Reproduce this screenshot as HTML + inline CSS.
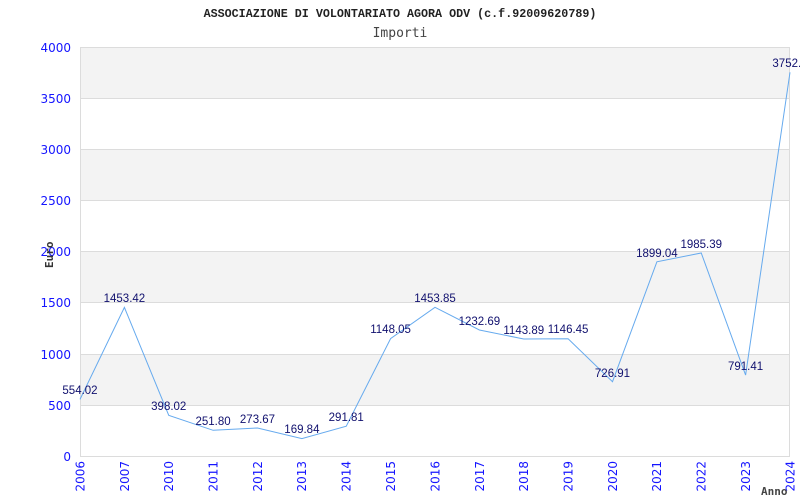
<!DOCTYPE html>
<html><head><meta charset="utf-8"><style>
html,body{margin:0;padding:0;background:#fff;width:800px;height:500px;overflow:hidden}
</style></head><body>
<svg width="800" height="500" xmlns="http://www.w3.org/2000/svg">
<rect x="80" y="47" width="710" height="51" fill="#f3f3f3"/>
<rect x="80" y="149" width="710" height="51" fill="#f3f3f3"/>
<rect x="80" y="251" width="710" height="51" fill="#f3f3f3"/>
<rect x="80" y="354" width="710" height="51" fill="#f3f3f3"/>
<g stroke="#dcdcdc" stroke-width="1">
<line x1="80" y1="98.5" x2="790" y2="98.5"/><line x1="80" y1="149.5" x2="790" y2="149.5"/>
<line x1="80" y1="200.5" x2="790" y2="200.5"/><line x1="80" y1="251.5" x2="790" y2="251.5"/>
<line x1="80" y1="302.5" x2="790" y2="302.5"/><line x1="80" y1="354.5" x2="790" y2="354.5"/>
<line x1="80" y1="405.5" x2="790" y2="405.5"/>
<rect x="80.5" y="47.5" width="709" height="409" fill="none"/>
</g>
<g font-family="DejaVu Sans, sans-serif" font-size="12" fill="#1515ff" text-anchor="end">
<text x="71" y="52">4000</text><text x="71" y="103">3500</text><text x="71" y="154">3000</text>
<text x="71" y="205">2500</text><text x="71" y="256">2000</text><text x="71" y="307">1500</text>
<text x="71" y="359">1000</text><text x="71" y="410">500</text><text x="71" y="461">0</text>
</g>
<g font-family="DejaVu Sans, sans-serif" font-size="12" fill="#1515ff" text-anchor="end">
<text transform="translate(84.5,461) rotate(-90)">2006</text>
<text transform="translate(129,461) rotate(-90)">2007</text>
<text transform="translate(173,461) rotate(-90)">2010</text>
<text transform="translate(217.5,461) rotate(-90)">2011</text>
<text transform="translate(262,461) rotate(-90)">2012</text>
<text transform="translate(306,461) rotate(-90)">2013</text>
<text transform="translate(350.5,461) rotate(-90)">2014</text>
<text transform="translate(395,461) rotate(-90)">2015</text>
<text transform="translate(439.5,461) rotate(-90)">2016</text>
<text transform="translate(484,461) rotate(-90)">2017</text>
<text transform="translate(528,461) rotate(-90)">2018</text>
<text transform="translate(572.5,461) rotate(-90)">2019</text>
<text transform="translate(617,461) rotate(-90)">2020</text>
<text transform="translate(661,461) rotate(-90)">2021</text>
<text transform="translate(705.5,461) rotate(-90)">2022</text>
<text transform="translate(750,461) rotate(-90)">2023</text>
<text transform="translate(794.5,461) rotate(-90)">2024</text>
</g>
<polyline fill="none" stroke="#66aaee" stroke-width="1" points="80,399.4 124.4,307.4 168.75,415.3 213.1,430.3 257.5,428 301.9,438.6 346.25,426.2 390.6,338.6 435,307.3 479.4,330 523.75,339 568.1,338.8 612.5,381.7 656.9,261.8 701.25,253 745.6,375.1 790,72.3"/>
<g font-family="Liberation Sans, sans-serif" font-size="11.5" fill="#10106e" text-anchor="middle">
<text x="80" y="394">554.02</text><text x="124.4" y="302">1453.42</text><text x="168.75" y="410">398.02</text>
<text x="213.1" y="425">251.80</text><text x="257.5" y="423">273.67</text><text x="301.9" y="433">169.84</text>
<text x="346.25" y="421">291.81</text><text x="390.6" y="333">1148.05</text><text x="435" y="302">1453.85</text>
<text x="479.4" y="325">1232.69</text><text x="523.75" y="334">1143.89</text><text x="568.1" y="333">1146.45</text>
<text x="612.5" y="377">726.91</text><text x="656.9" y="257">1899.04</text><text x="701.25" y="248">1985.39</text>
<text x="745.6" y="370">791.41</text><text x="790" y="67">3752.5</text>
</g>
<text x="400" y="17" font-family="Liberation Mono, monospace" font-size="11.7" font-weight="bold" fill="#222" text-anchor="middle">ASSOCIAZIONE DI VOLONTARIATO AGORA ODV (c.f.92009620789)</text>
<text x="400" y="37" font-family="DejaVu Sans Mono, monospace" font-size="13" fill="#444" text-anchor="middle">Importi</text>
<text transform="translate(53,268) rotate(-90)" font-family="DejaVu Sans Mono, monospace" font-size="11" font-weight="bold" fill="#333">Euro</text>
<text x="761" y="495" font-family="DejaVu Sans Mono, monospace" font-size="11" font-weight="bold" fill="#444">Anno</text>
</svg>
</body></html>
